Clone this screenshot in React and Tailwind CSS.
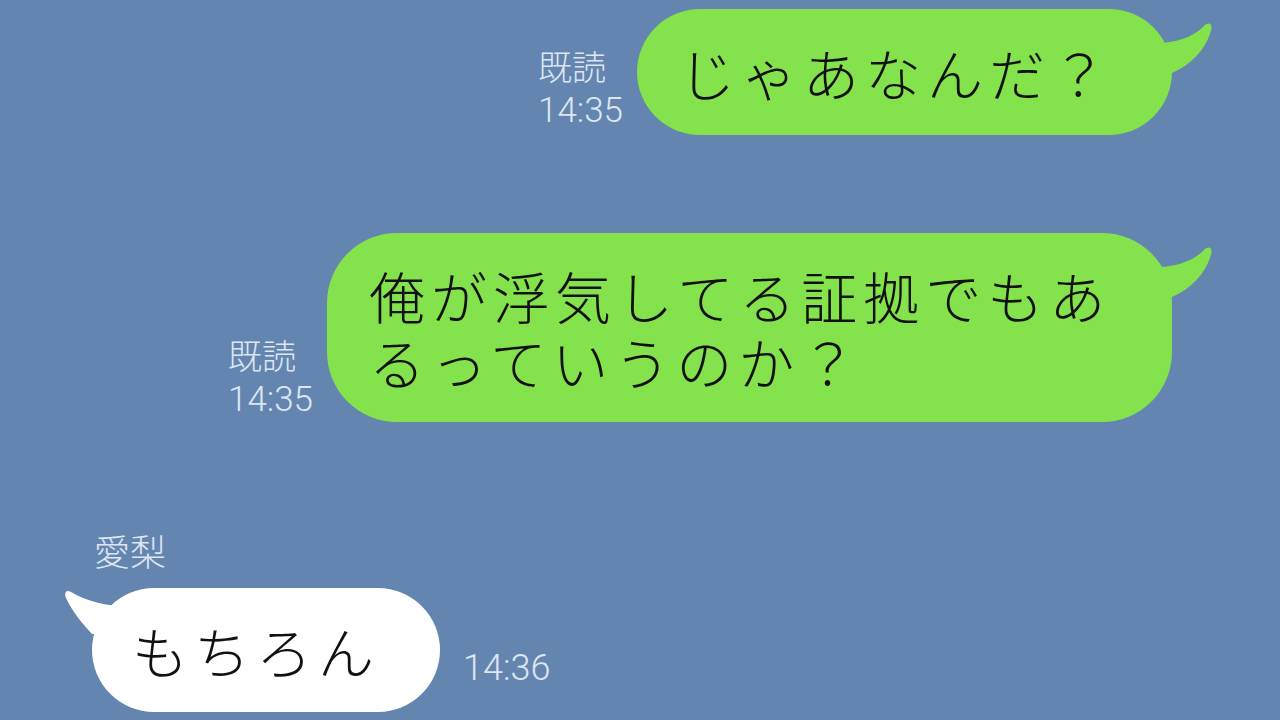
const jp = { fontFamily: '"Noto Sans CJK JP", "Noto Sans", sans-serif' };
const num = { fontFamily: 'Roboto, "Noto Sans", sans-serif' };

const RightTail = () => (
  <svg
    className="absolute right-[-40px] top-[12px]"
    width="54"
    height="56"
    viewBox="0 0 54 56"
  >
    <path
      d="M0,22 C16,22 34,17 46,5 C51,0 55,3 53,10 C47,30 32,44 14,52 L0,52 Z"
      fill="#84e24c"
    />
  </svg>
);

const LeftTail = () => (
  <svg
    className="absolute left-[-30px] top-0"
    width="62"
    height="50"
    viewBox="0 0 62 50"
  >
    <path
      d="M62,18 C46,18 26,14 9,4 C4,1 2,5 4,10 C11,25 21,36 30,46 L62,46 Z"
      fill="#ffffff"
    />
  </svg>
);

const ReadMark = ({ className }) => (
  <div className={`flex flex-col gap-[13px] text-[#dde6f1] ${className}`}>
    <div className="text-[34px] leading-[34px] font-light" style={jp}>
      既読
    </div>
    <div className="text-[35px] leading-[30px] font-light" style={num}>
      14:35
    </div>
  </div>
);

const Line = ({ children }) => (
  <span className="block h-[66px]">{children}</span>
);

export default function App() {
  return (
    <div className="w-[1280px] h-[720px] overflow-hidden bg-[#6385b0] flex flex-col">
      {/* sent 1 */}
      <div className="flex justify-end items-end gap-[14px] pr-[108px] mt-[9px]">
        <ReadMark className="mb-[9px]" />
        <div className="relative w-[535px] h-[126px] rounded-full bg-[#84e24c] flex items-center pl-[42px]">
          <RightTail />
          <p
            className="relative text-[56px] leading-[66px] tracking-[6px] font-light text-[#111] whitespace-nowrap"
            style={jp}
          >
            じゃあなんだ？
          </p>
        </div>
      </div>

      {/* sent 2 */}
      <div className="flex justify-end items-end gap-[14px] pr-[108px] mt-[98px]">
        <ReadMark className="mb-[7px]" />
        <div className="relative w-[845px] h-[189px] rounded-[70px] bg-[#84e24c] flex items-center pl-[42px]">
          <RightTail />
          <div
            className="relative text-[56px] leading-[66px] tracking-[6px] font-light text-[#111] whitespace-nowrap"
            style={jp}
          >
            <Line>俺が浮気してる証拠でもあ</Line>
            <Line>るっていうのか？</Line>
          </div>
        </div>
      </div>

      {/* received */}
      <div className="pl-[94px] mt-[106px]">
        <p className="text-[36px] leading-[44px] font-light text-[#dde6f1]" style={jp}>
          愛梨
        </p>
      </div>
      <div className="flex items-end gap-[23px] pl-[92px] mt-[16px]">
        <div className="relative w-[348px] h-[124px] rounded-full bg-white flex items-center pl-[40px]">
          <LeftTail />
          <p
            className="relative text-[56px] leading-[66px] tracking-[6px] font-light text-[#111] whitespace-nowrap"
            style={jp}
          >
            もちろん
          </p>
        </div>
        <span
          className="text-[36px] leading-[40px] font-light text-[#dde6f1] mb-[24px]"
          style={num}
        >
          14:36
        </span>
      </div>
    </div>
  );
}
